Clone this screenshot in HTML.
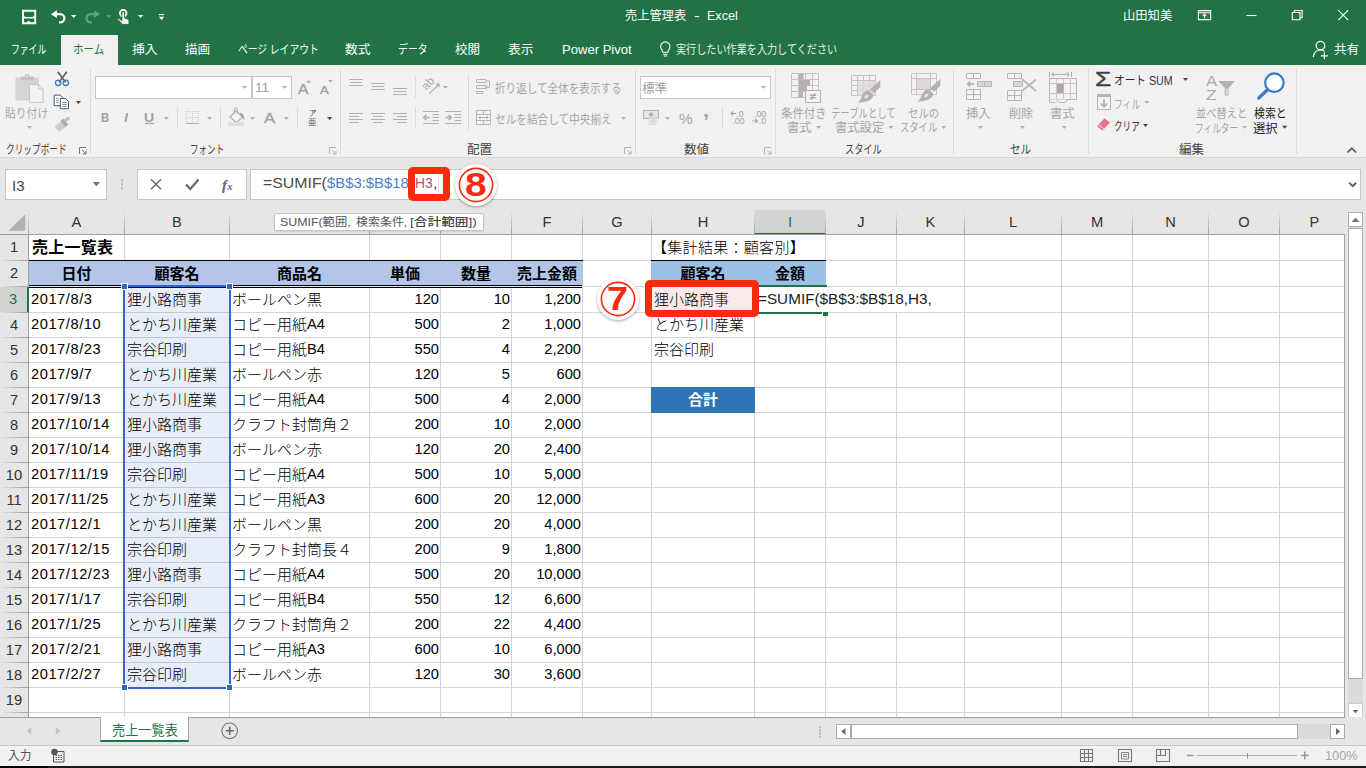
<!DOCTYPE html>
<html lang="ja"><head><meta charset="utf-8"><title>売上管理表 - Excel</title>
<style>
html,body{margin:0;padding:0}
body{width:1366px;height:768px;overflow:hidden;position:relative;background:#e6e6e6;font-family:"Liberation Sans","Noto Sans CJK JP",sans-serif;font-size:13px;color:#444}
div,span,svg{position:absolute;box-sizing:border-box}
span{position:static}
.t{white-space:nowrap;transform-origin:0 50%}
/* title */
#title{left:0;top:0;width:1366px;height:65px;background:#217346}
#title .w{color:#fff;white-space:nowrap}
#hometab{left:61px;top:35px;width:57px;height:30px;background:#f1f1f1}
/* ribbon */
#ribbon{left:0;top:65px;width:1366px;height:93px;background:#f1f1f1;border-bottom:1px solid #d6d6d6}
.sep{width:1px;background:#dadada;top:6px;height:85px}
.ssep{width:1px;background:#dadada}
.gl{top:77px;font-size:12px;color:#444;white-space:nowrap;height:16px;line-height:16px;letter-spacing:-0.5px}
.dis{color:#a6a6a6}
.rt{white-space:nowrap;font-size:12px;line-height:15px;letter-spacing:-0.6px}
.box{background:#fff;border:1px solid #c6c6c6}
/* formula bar */
#fbar{left:0;top:159px;width:1366px;height:51px;background:#e6e6e6}
/* grid */
#grid{left:0;top:0;width:1366px;height:717px;overflow:hidden}
#gridbg{left:28px;top:235px;width:1316px;height:482px;background:#fff}
.ch{top:210px;height:24px;line-height:24px;text-align:center;font-size:14.67px;color:#333;background:#e6e6e6}
.ch.sel{background:#d2d2d2;color:#217346;border-bottom:2px solid #217346;height:25px}
.rh{left:0;width:28px;text-align:center;font-size:14.67px;color:#333;background:#e6e6e6}
.rh.sel{background:#d2d2d2;color:#217346;border-right:2px solid #217346;width:29px;padding-right:1px;z-index:2}
.vl{top:235px;width:1px;height:482px;background:#d4d4d4}
.hl{left:29px;width:1315px;height:1px;background:#d4d4d4}
.c{font-size:15px;font-weight:300;color:#000;white-space:nowrap;padding:0 2px;font-family:"Liberation Sans","Noto Sans CJK JP",sans-serif}
.c.r{text-align:right;padding-right:1px}
.c.ctr{text-align:center;padding:0}
.c.b{font-weight:bold;color:#000}
.n{font-size:14.67px;position:relative;top:-1px;font-weight:400}
.dt{letter-spacing:.55px;padding-left:2px}
</style></head><body>
<div id="title"></div><div id="hometab"></div>
<div class="t" id="L1" style="left:625.3px;top:6.1px;font-size:12px;line-height:20px;height:20px;color:#fff;transform:scaleX(1.0197);">売上管理表</div>
<div class="t" id="L2" style="left:694.3px;top:6.1px;font-size:12px;line-height:20px;height:20px;color:#fff;transform:scaleX(1.4250);">-</div>
<div class="t" id="L3" style="left:706.8px;top:6.1px;font-size:12.5px;line-height:20px;height:20px;color:#fff;transform:scaleX(1.0040);">Excel</div>
<div class="t" id="L4" style="left:1123.3px;top:6.1px;font-size:12px;line-height:20px;height:20px;color:#fff;transform:scaleX(1.0247);">山田知美</div>
<div class="t" id="L5" style="left:11.3px;top:40.1px;font-size:12px;line-height:20px;height:20px;color:#fff;transform:scaleX(0.7331);">ファイル</div>
<div class="t" id="L6" style="left:73.3px;top:40.1px;font-size:12px;line-height:20px;height:20px;color:#217346;transform:scaleX(0.8754);">ホーム</div>
<div class="t" id="L7" style="left:131.8px;top:40.1px;font-size:12px;line-height:20px;height:20px;color:#fff;transform:scaleX(1.0701);">挿入</div>
<div class="t" id="L8" style="left:185.3px;top:40.1px;font-size:12px;line-height:20px;height:20px;color:#fff;transform:scaleX(1.0493);">描画</div>
<div class="t" id="L9" style="left:237.8px;top:40.1px;font-size:12px;line-height:20px;height:20px;color:#fff;transform:scaleX(0.8143);">ページ レイアウト</div>
<div class="t" id="L10" style="left:345.3px;top:40.1px;font-size:12px;line-height:20px;height:20px;color:#fff;transform:scaleX(1.0701);">数式</div>
<div class="t" id="L11" style="left:398.3px;top:40.1px;font-size:12px;line-height:20px;height:20px;color:#fff;transform:scaleX(0.8246);">データ</div>
<div class="t" id="L12" style="left:455.3px;top:40.1px;font-size:12px;line-height:20px;height:20px;color:#fff;transform:scaleX(1.0493);">校閲</div>
<div class="t" id="L13" style="left:507.8px;top:40.1px;font-size:12px;line-height:20px;height:20px;color:#fff;transform:scaleX(1.0701);">表示</div>
<div class="t" id="L14" style="left:561.8px;top:40.1px;font-size:12.5px;line-height:20px;height:20px;color:#fff;transform:scaleX(1.0449);">Power Pivot</div>
<div class="t" id="L15" style="left:676.3px;top:40.1px;font-size:12px;line-height:20px;height:20px;color:#e4efe8;transform:scaleX(0.8427);">実行したい作業を入力してください</div>
<div class="t" id="L16" style="left:1334.3px;top:40.1px;font-size:12px;line-height:20px;height:20px;color:#fff;transform:scaleX(1.0493);">共有</div>
<svg id="ticons" width="1366" height="65" viewBox="0 0 1366 65" style="left:0;top:0" fill="none" stroke="#fff" stroke-width="1.5">
<!-- save -->
<path d="M23 10.800h12.200v12.400H23z" stroke-width="1.900"/><path d="M23 17.700h12.200" stroke-width="1.500"/><path d="M27.500 21h2.200v2.500h-2.200z" fill="#fff" stroke="none"/><path d="M24.300 16.200l1 .8M33.900 16.200l-1 .8" stroke-width="1"/>
<!-- undo -->
<path d="M50.900 14.200l6-3.900v7.800z" fill="#fff" stroke="none"/><path d="M56.500 14.200h3.700a4.200 4.100 0 0 1 0 8.200h-1.200" stroke-width="2.200"/>
<path d="M71 14.900h5.500l-2.750 3.100z" fill="#fff" stroke="none"/>
<!-- redo (dim) -->
<path d="M100 14.200l-6-3.900v7.800z" fill="#62a07d" stroke="none"/><path d="M94.400 14.200h-3.700a4.200 4.100 0 0 0 0 8.200h1.200" stroke="#62a07d" stroke-width="2.200"/>
<path d="M106 14.900h5.500l-2.750 3.100z" fill="#5b9f79" stroke="none"/>
<!-- touch mode -->
<circle cx="123.200" cy="13.200" r="3.300" stroke-width="1.700"/>
<path d="M121.900 12.800a1.300 1.300 0 0 1 2.600 0v5l3.400 1.400c.8.400 1.100 1 1.100 1.800v3.500h-6.300l-4.900-4.900c-.5-.6.300-1.600 1.100-1l3 2z" fill="#f2f2f2" stroke="#217346" stroke-width=".9"/>
<path d="M137.800 14.900h5.500l-2.750 3.100z" fill="#fff" stroke="none"/>
<!-- customize -->
<path d="M158.900 14.550h5.300" stroke-width="1.200"/><path d="M158.800 16.700h5.500l-2.750 3.400z" fill="#fff" stroke="none"/>
<!-- bulb -->
<path d="M662.800 52.300c0-1.700-2.200-3-2.200-5.700a4.700 4.700 0 0 1 9.400 0c0 2.700-2.200 4-2.200 5.700z" stroke-width="1.100"/><path d="M663 54.200h4.600M663.700 56h3.200" stroke-width="1.100"/>
<!-- ribbon display -->
<path d="M1198.400 10.600h12.200v9H1198.400z" stroke-width="1.100"/><path d="M1198.400 12.800h12.200" stroke-width="1.100"/><path d="M1204.500 18.300v-3.800M1202.600 16.200l1.900-1.900 1.900 1.900" stroke-width="1.100"/>
<!-- min -->
<path d="M1246.500 15.500h10" stroke-width="1.100"/>
<!-- restore -->
<path d="M1292.300 12.500h7.700v7.200h-7.700z" stroke-width="1.100"/><path d="M1294.400 12.500v-2h7.700v7.200h-2" stroke-width="1.100"/>
<!-- close -->
<path d="M1338.200 10.200l10 10M1348.200 10.200l-10 10" stroke-width="1.100"/>
<!-- share -->
<circle cx="1320.500" cy="45.600" r="4.300" stroke-width="1.200"/><path d="M1313.300 57c.5-4.500 3.300-7 7.200-7 1.600 0 3 .4 4 1.200" stroke-width="1.200"/><path d="M1324.400 52.300v7M1320.900 55.800h7" stroke-width="1.200"/>
</svg>
<div id="ribbon"></div>
<div class="sep" style="left:90px;top:69px;height:85px"></div>
<div class="sep" style="left:340px;top:69px;height:85px"></div>
<div class="sep" style="left:635px;top:69px;height:85px"></div>
<div class="sep" style="left:775px;top:69px;height:85px"></div>
<div class="sep" style="left:953px;top:69px;height:85px"></div>
<div class="sep" style="left:1088px;top:69px;height:85px"></div>
<div class="sep" style="left:1296px;top:69px;height:85px"></div>
<div class="ssep" style="left:177px;top:107px;height:22px"></div>
<div class="ssep" style="left:220px;top:107px;height:22px"></div>
<div class="ssep" style="left:297px;top:107px;height:22px"></div>
<div class="ssep" style="left:415px;top:76px;height:22px"></div>
<div class="ssep" style="left:415px;top:107px;height:22px"></div>
<div class="ssep" style="left:468px;top:75px;height:55px"></div>
<div class="ssep" style="left:722px;top:107px;height:22px"></div>
<div class="box" style="left:95px;top:76px;width:157px;height:23px"></div>
<div class="box" style="left:252px;top:76px;width:40px;height:23px"></div>
<div class="box" style="left:640px;top:76px;width:131px;height:23px"></div>
<div class="t" id="L17" style="left:6.3px;top:140.1px;font-size:12px;line-height:20px;height:20px;color:#444;transform:scaleX(0.7225);">クリップボード</div>
<div class="t" id="L18" style="left:190.3px;top:140.1px;font-size:12px;line-height:20px;height:20px;color:#444;transform:scaleX(0.7123);">フォント</div>
<div class="t" id="L19" style="left:467.3px;top:140.1px;font-size:12px;line-height:20px;height:20px;color:#444;transform:scaleX(1.0493);">配置</div>
<div class="t" id="L20" style="left:684.3px;top:140.1px;font-size:12px;line-height:20px;height:20px;color:#444;transform:scaleX(1.0493);">数値</div>
<div class="t" id="L21" style="left:845.3px;top:140.1px;font-size:12px;line-height:20px;height:20px;color:#444;transform:scaleX(0.7643);">スタイル</div>
<div class="t" id="L22" style="left:1010.3px;top:140.1px;font-size:12px;line-height:20px;height:20px;color:#444;transform:scaleX(0.8828);">セル</div>
<div class="t" id="L23" style="left:1179.3px;top:140.1px;font-size:12px;line-height:20px;height:20px;color:#444;transform:scaleX(1.0493);">編集</div>
<div class="t" id="L24" style="left:5.3px;top:104.3px;font-size:12px;line-height:20px;height:20px;color:#a6a6a6;transform:scaleX(0.8997);">貼り付け</div>
<div class="t" id="L25" style="left:101.3px;top:108.1px;font-size:12px;line-height:20px;height:20px;color:#a0a0a0;font-weight:bold;transform:scaleX(0.9456);">B</div>
<div class="t" id="L26" style="left:124.3px;top:107.9px;font-size:13px;line-height:20px;height:20px;color:#a0a0a0;font-weight:bold;font-style:italic;font-family:"Liberation Serif",serif;">I</div>
<div class="t" id="L27" style="left:144.3px;top:107.8px;font-size:12px;line-height:20px;height:20px;color:#a0a0a0;font-weight:bold;transform:scaleX(1.1762);">U</div>
<div class="t" id="L28" style="left:254.8px;top:78.1px;font-size:12px;line-height:20px;height:20px;color:#a0a0a0;transform:scaleX(1.1388);">11</div>
<div class="t" id="L29" style="left:297.8px;top:78.6px;font-size:14px;line-height:20px;height:20px;color:#a0a0a0;transform:scaleX(1.1130);-webkit-text-stroke:.3px #a0a0a0;">A</div>
<div class="t" id="L30" style="left:320.3px;top:79.6px;font-size:11.5px;line-height:20px;height:20px;color:#a0a0a0;transform:scaleX(1.1340);-webkit-text-stroke:.3px #a0a0a0;">A</div>
<div class="t" id="L31" style="left:264.3px;top:108.1px;font-size:15px;line-height:20px;height:20px;color:#a0a0a0;transform:scaleX(1.1183);-webkit-text-stroke:.3px #a0a0a0;">A</div>
<div class="t" id="L32" style="left:308.8px;top:108.8px;font-size:8px;line-height:10px;height:10px;color:#666;">ア</div>
<div class="t" id="L33" style="left:308.0px;top:116.9px;font-size:8.5px;line-height:10px;height:10px;color:#666;">亜</div>
<div class="t" id="L34" style="left:494.8px;top:79.1px;font-size:12px;line-height:20px;height:20px;color:#a6a6a6;transform:scaleX(0.8820);">折り返して全体を表示する</div>
<div class="t" id="L35" style="left:494.8px;top:110.1px;font-size:12px;line-height:20px;height:20px;color:#a6a6a6;transform:scaleX(0.8864);">セルを結合して中央揃え</div>
<div class="t" id="L36" style="left:642.3px;top:78.9px;font-size:12px;line-height:20px;height:20px;color:#a0a0a0;transform:scaleX(1.0493);">標準</div>
<div class="t" id="L37" style="left:678.8px;top:108.8px;font-size:14.5px;line-height:20px;height:20px;color:#a6a6a6;transform:scaleX(1.0615);">%</div>
<div class="t" id="L38" style="left:703.3px;top:100.1px;font-size:20px;line-height:20px;height:20px;color:#a6a6a6;font-weight:bold;transform:scaleX(1.1146);font-family:"Liberation Serif",serif;">,</div>
<div class="t" id="L39" style="left:781.3px;top:104.3px;font-size:12px;line-height:20px;height:20px;color:#a6a6a6;transform:scaleX(0.9518);">条件付き</div>
<div class="t" id="L40" style="left:787.3px;top:118.4px;font-size:12px;line-height:20px;height:20px;color:#a6a6a6;transform:scaleX(1.0285);">書式</div>
<div class="t" id="L41" style="left:831.3px;top:104.3px;font-size:12px;line-height:20px;height:20px;color:#a6a6a6;transform:scaleX(0.7803);">テーブルとして</div>
<div class="t" id="L42" style="left:835.3px;top:118.4px;font-size:12px;line-height:20px;height:20px;color:#a6a6a6;transform:scaleX(1.0247);">書式設定</div>
<div class="t" id="L43" style="left:908.3px;top:104.3px;font-size:12px;line-height:20px;height:20px;color:#a6a6a6;transform:scaleX(0.8663);">セルの</div>
<div class="t" id="L44" style="left:900.3px;top:118.4px;font-size:12px;line-height:20px;height:20px;color:#a6a6a6;transform:scaleX(0.7747);">スタイル</div>
<div class="t" id="L45" style="left:966.3px;top:104.1px;font-size:12px;line-height:20px;height:20px;color:#a6a6a6;transform:scaleX(1.0285);">挿入</div>
<div class="t" id="L46" style="left:1008.8px;top:104.1px;font-size:12px;line-height:20px;height:20px;color:#a6a6a6;transform:scaleX(1.0077);">削除</div>
<div class="t" id="L47" style="left:1050.3px;top:104.1px;font-size:12px;line-height:20px;height:20px;color:#a6a6a6;transform:scaleX(1.0285);">書式</div>
<div class="t" id="L48" style="left:1095.3px;top:69.1px;font-size:21px;line-height:20px;height:20px;color:#404040;transform:scaleX(1.2477);-webkit-text-stroke:.45px #404040;">Σ</div>
<div class="t" id="L49" style="left:1114.3px;top:70.6px;font-size:12px;line-height:20px;height:20px;color:#333;transform:scaleX(0.8892);">オート SUM</div>
<div class="t" id="L50" style="left:1114.3px;top:94.6px;font-size:12px;line-height:20px;height:20px;color:#a6a6a6;transform:scaleX(0.7325);">フィル</div>
<div class="t" id="L51" style="left:1114.3px;top:117.1px;font-size:12px;line-height:20px;height:20px;color:#333;transform:scaleX(0.7136);">クリア</div>
<div class="t" id="L52" style="left:1205.8px;top:70.6px;font-size:15px;line-height:20px;height:20px;color:#adaaad;transform:scaleX(1.1183);">A</div>
<div class="t" id="L53" style="left:1206.3px;top:85.0px;font-size:15px;line-height:20px;height:20px;color:#adaaad;transform:scaleX(1.1666);">Z</div>
<div class="t" id="L54" style="left:1195.8px;top:104.4px;font-size:12px;line-height:20px;height:20px;color:#a6a6a6;transform:scaleX(0.8531);">並べ替えと</div>
<div class="t" id="L55" style="left:1194.8px;top:118.6px;font-size:12px;line-height:20px;height:20px;color:#a6a6a6;transform:scaleX(0.7228);">フィルター</div>
<div class="t" id="L56" style="left:1254.3px;top:104.4px;font-size:12px;line-height:20px;height:20px;color:#222;transform:scaleX(0.9079);">検索と</div>
<div class="t" id="L57" style="left:1253.3px;top:118.6px;font-size:12px;line-height:20px;height:20px;color:#222;transform:scaleX(1.0285);">選択</div>
<svg id="ricons" width="1366" height="160" viewBox="0 0 1366 160" style="left:0;top:0" fill="none">
<path d="M15.500 77.500h23v23h-23z" fill="#d6d3d6"/><path d="M20.600 76.500h4a2.600 2.600 0 0 1 5.200 0h4v3.400h-13.200z" fill="#c3c0c3"/><circle cx="27.200" cy="76.300" r="1" fill="#f1f1f1"/>
<path d="M29.500 84.500h9l4.500 4.500v13.500h-13.500z" fill="#f4f0f4" stroke="#c9c6c9"/><path d="M38.500 84.500v4.500h4.500" stroke="#c9c6c9"/>
<path d="M27.0 126.0H32.2L29.6 129.0z" fill="#b4b4b4"/>
<path d="M57.800 71.800l7.800 10.600M66.800 71.800l-7.800 10.600" stroke="#5a5a5a" stroke-width="1.600"/><circle cx="58.200" cy="82.800" r="2.700" stroke="#3f7cc2" stroke-width="1.300"/><circle cx="65.800" cy="82.800" r="2.700" stroke="#3f7cc2" stroke-width="1.300"/>
<path d="M54.200 95.100h6l2.600 2.600v8h-8.600z" fill="#fff" stroke="#555" stroke-width="1"/><path d="M60.300 98.500h5.200l3 3v7.200h-8.200z" fill="#fff" stroke="#555" stroke-width="1"/><path d="M56 98.500h2.500M56 100.500h2.500M56 102.500h2.500M62.300 102.500h4.400M62.300 104.500h4.400M62.300 106.500h4.400" stroke="#3f7cc2" stroke-width=".8"/>
<path d="M76.0 101.0H81.0L78.5 104.0z" fill="#444"/>
<path d="M54.500 126.500l6.500-5 4.500 5.500-6.500 5z" fill="#cfcccf"/><path d="M60.500 121l3-2.300 4.800 5.800-3 2.500z" fill="#aaa7aa"/><path d="M64.200 119.500l4-3.200 2 2.500-4 3.200z" fill="#c2bfc2"/>
<path d="M79.5 154.0v-6.500h6.500" fill="none" stroke="#777" stroke-width="1"/><path d="M82.0 150.0l4 4m0-3.200v3.200h-3.200" fill="none" stroke="#777" stroke-width="1"/>
<path d="M242.0 86.0H247.2L244.6 88.8z" fill="#b1b1b1"/>
<path d="M282.0 86.0H287.2L284.6 88.8z" fill="#b1b1b1"/>
<path d="M163.7 117.0H169.0L166.3 120.0z" fill="#b1b1b1"/>
<path d="M207.0 117.0H212.0L209.5 120.0z" fill="#b1b1b1"/>
<path d="M250.0 117.0H255.0L252.5 120.0z" fill="#b1b1b1"/>
<path d="M283.7 117.0H289.0L286.4 120.0z" fill="#b1b1b1"/>
<path d="M327.0 117.0H332.2L329.6 120.0z" fill="#444"/>
<path d="M145 123.500h9" stroke="#a0a0a0" stroke-width="1.200"/>
<path d="M306 82.700h5l-2.500-2.700z" fill="#b1b1b1"/><path d="M328 80h4.800l-2.400 2.700z" fill="#b1b1b1"/>
<path d="M186.500 111.500h12M186.500 117.500h12M186.500 111v12M192.500 111v12M198.500 111v12" stroke="#d5c4d5" stroke-width="1" stroke-dasharray="1 1"/><path d="M186 123.500h13" stroke="#b5b5b5" stroke-width="1.200"/>
<path d="M230 117l6.300-6.300 6.300 6.300-6.300 5.600z" fill="#f7f3f7" stroke="#a9a9a9" stroke-width="1.100"/><path d="M234.300 113.300v-4a1.400 1.400 0 0 1 2.800 0v4.500" stroke="#a9a9a9" stroke-width="1"/><path d="M240.300 112.600c2.500.600 4.300 3.200 4 7.300-.1.500-.6.500-.8 0-.4-2-1.600-3.600-3.400-4.300z" fill="#a9a9a9"/><path d="M228 122h16v4h-16z" fill="#e3dbe3"/>
<path d="M312 111.300l4-1" stroke="#666" stroke-width=".8"/>
<path d="M329.5 154.0v-6.500h6.500" fill="none" stroke="#b5b5b5" stroke-width="1"/><path d="M332.0 150.0l4 4m0-3.200v3.200h-3.200" fill="none" stroke="#b5b5b5" stroke-width="1"/>
<path d="M349.0 79.5H363.0M350.0 82.5H362.0M349.0 85.5H363.0" stroke="#b1b1b1" stroke-width="1"/>
<path d="M371.0 83.5H385.0M372.0 86.5H384.0M371.0 89.5H385.0" stroke="#b1b1b1" stroke-width="1"/>
<path d="M393.0 88.5H407.0M394.0 91.5H406.0M393.0 94.5H407.0" stroke="#b1b1b1" stroke-width="1"/>
<path d="M349.0 113.5H363.0M349.0 116.5H359.0M349.0 119.5H363.0M349.0 122.5H359.0" stroke="#b1b1b1" stroke-width="1"/>
<path d="M371.0 113.5H385.0M373.0 116.5H383.0M371.0 119.5H385.0M373.0 122.5H383.0" stroke="#b1b1b1" stroke-width="1"/>
<path d="M393.0 113.5H407.0M397.0 116.5H407.0M393.0 119.5H407.0M397.0 122.5H407.0" stroke="#b1b1b1" stroke-width="1"/>
<path d="M429.200 93.800l9.600-9.300M436 84.200h3v3" stroke="#b1b1b1" stroke-width="1.200"/>
<text x="0" y="0" transform="translate(426.300 90.800) rotate(-47)" font-family="Liberation Sans,sans-serif" font-size="11.500" fill="#a8a8a8">ab</text>
<path d="M442.7 86.0H448.0L445.4 88.8z" fill="#b1b1b1"/>
<path d="M423 111.500h16M423 123.500h16M432.500 114.500h6.500M432.500 117.500h6.500M432.500 120.500h6.500" stroke="#b1b1b1" stroke-width="1"/><path d="M430 117.500h-6M426.500 114.800l-2.800 2.700 2.800 2.700" stroke="#b5b5b5" stroke-width="1.600"/>
<path d="M445 111.500h16M445 123.500h16M454.500 114.500h6.500M454.500 117.500h6.500M454.500 120.500h6.500" stroke="#b1b1b1" stroke-width="1"/><path d="M445.500 117.500h6M448.500 114.800l2.800 2.700-2.800 2.700" stroke="#b5b5b5" stroke-width="1.600"/>
<path d="M476.500 79.500h9.500v3h-9.500zM476.500 85.500h9.500v3h-9.500zM476.500 91.500h6.500v2h-6.500z" stroke="#b8b5b8" stroke-width="1"/><path d="M486 81h3.500v6.500h-4M487.500 85.500l-2 2 2 2" stroke="#b8b5b8" stroke-width="1"/>
<path d="M476.500 110.500h14v14h-14z" fill="#f4f0f4" stroke="#b8b5b8"/><path d="M476.500 114.500h14M476.500 120.500h14M483.500 110.500v4M483.500 120.500v4" stroke="#b8b5b8"/><path d="M479 117.500h9M480.500 116l-1.500 1.500 1.500 1.500M486.500 116l1.500 1.500-1.500 1.500" stroke="#aaa" stroke-width=".9"/>
<path d="M621.0 117.0H626.0L623.5 120.0z" fill="#b1b1b1"/>
<path d="M624.5 154.0v-6.500h6.500" fill="none" stroke="#b5b5b5" stroke-width="1"/><path d="M627.0 150.0l4 4m0-3.200v3.200h-3.200" fill="none" stroke="#b5b5b5" stroke-width="1"/>
<path d="M760.7 86.0H766.0L763.4 88.8z" fill="#b1b1b1"/>
<path d="M643.500 110.500h15v8h-15z" fill="#e6e2e6" stroke="#b5b2b5"/><circle cx="651" cy="114.500" r="2.200" fill="#b5b2b5"/><ellipse cx="653.500" cy="118.500" rx="4.500" ry="1.300" fill="#d9d5d9"/><ellipse cx="653" cy="121.300" rx="4.500" ry="1.300" fill="#d9d5d9"/><ellipse cx="652" cy="124" rx="4.500" ry="1.300" fill="#e0dce0"/>
<path d="M665.0 117.0H670.0L667.5 120.0z" fill="#b1b1b1"/>
<text font-family="Liberation Sans,sans-serif" font-size="8.800" fill="#a3a3a3"><tspan x="736.300" y="117">.0</tspan><tspan x="732.300" y="124">.00</tspan><tspan x="754" y="117">.00</tspan><tspan x="758.700" y="124">.0</tspan></text>
<path d="M736.200 113.500h-5.200M733.200 111.300l-2.200 2.200 2.200 2.200" stroke="#a3a3a3" stroke-width="1.100"/><path d="M752.300 121h5.200M755.300 118.800l2.200 2.200-2.200 2.200" stroke="#a3a3a3" stroke-width="1.100"/>
<path d="M764.5 154.0v-6.500h6.500" fill="none" stroke="#b5b5b5" stroke-width="1"/><path d="M767.0 150.0l4 4m0-3.200v3.200h-3.200" fill="none" stroke="#b5b5b5" stroke-width="1"/>
<path d="M791.500 73.500h27v24h-27z" fill="#f4f0f4" stroke="#c6c3c6"/><path d="M798.500 73.500v24M805.500 73.500v24M812.500 73.500v24M791.500 79.500h27M791.500 85.500h27M791.500 91.500h27" stroke="#c6c3c6"/>
<path d="M799 74h4.500v5.500h-4.500zM799 80h11v5.500h-11zM799 86h8v5.500h-8zM799 92h4v5h-4z" fill="#b4b1b4"/>
<path d="M805.500 90.500h15v12h-15z" fill="#f4f0f4" stroke="#b4b1b4"/><path d="M809.800 95.200h6.400M809.800 97.800h6.400M814.800 93.300l-3.600 6.600" stroke="#909090" stroke-width="1"/>
<path d="M851.500 75.500h24v20h-24z" fill="#f4f0f4" stroke="#c6c3c6"/><path d="M857.500 75.500v20M863.500 75.500v20M869.500 75.500v20M851.500 80.500h24M851.500 85.500h24M851.500 90.500h24" stroke="#c6c3c6"/><path d="M858 81h17.500v14.500h-17.500z" fill="#dcd8dc" opacity=".8"/>
<path d="M880.3 80.3 v6.700l-6.300 6-4-3.500z" fill="#b4b1b4"/><path d="M868.8 90.6 l4.200 3.900c.700 4.600-5 8.200-15.400 8.100 3-2 3.400-5.200 5-8.200 1.300-2.600 3.600-4 6.200-3.800z" fill="#b4b1b4"/><ellipse cx="866.3" cy="96.6" rx="2.300" ry="1.400" fill="#e9e6e9" transform="rotate(-40 866.3 96.6)"/>
<path d="M911.500 73.500h25v21h-25z" fill="#f4f0f4" stroke="#c6c3c6"/><path d="M916.500 73.500v21M930.500 73.500v21M911.500 78.500h25M911.500 89.500h25" stroke="#c6c3c6"/><path d="M917 79h13v10h-13z" fill="#dcd8dc"/>
<path d="M940.3 79.1 v6.700l-6.300 6-4-3.500z" fill="#b4b1b4"/><path d="M928.8 89.4 l4.200 3.900c.700 4.600-5 8.200-15.400 8.100 3-2 3.400-5.200 5-8.200 1.300-2.600 3.600-4 6.200-3.800z" fill="#b4b1b4"/><ellipse cx="926.3" cy="95.4" rx="2.300" ry="1.400" fill="#e9e6e9" transform="rotate(-40 926.3 95.4)"/>
<path d="M816.0 126.0H821.0L818.5 128.9z" fill="#b1b1b1"/>
<path d="M888.3 126.0H893.3L890.8 128.9z" fill="#b1b1b1"/>
<path d="M941.3 126.0H946.3L943.8 128.9z" fill="#b1b1b1"/>
<path d="M966.500 73.500h14v5h-14zM973.500 73.500v5M966.500 89.500h14v10h-14zM973.500 89.500v10M966.500 94.500h14" fill="#f4f0f4" stroke="#b8b5b8"/><path d="M977.500 81.500h14v5h-14z" fill="#d9d5d9" stroke="#b8b5b8"/><path d="M984.500 81.500v5" stroke="#b8b5b8"/><path d="M974 84h-6.500M970.300 81.500l-2.600 2.500 2.600 2.500" stroke="#aaa" stroke-width="1.500"/>
<path d="M1007.500 73.500h14v5h-14zM1014.500 73.500v5M1007.500 90.500h14v10h-14zM1014.500 90.500v10M1007.500 95.500h14" fill="#f4f0f4" stroke="#b8b5b8"/><path d="M1013.500 81.500h9v5h-9z" fill="#d9d5d9" stroke="#b8b5b8"/><path d="M1022 79l14 12M1036 79.500l-14 11.500" stroke="#bab7ba" stroke-width="1.800"/>
<path d="M1049.500 78.500h27v21h-27z" fill="#f4f0f4" stroke="#b8b5b8"/><path d="M1056.500 78.500v21M1063.500 78.500v21M1070.500 78.500v21M1049.500 83.500h27M1049.500 93.500h27" stroke="#c9c6c9"/><path d="M1057 84h6.500v9h-6.500z" fill="#aaa7aa"/><path d="M1049.500 99.500v3h6l2-2 2 2h6l2-3" fill="#f4f0f4" stroke="#b8b5b8"/><path d="M1049.500 72v4.800M1071.500 72v4.800M1051.800 74.400h17.400M1054.200 72l-2.500 2.400 2.500 2.400M1066.800 72l2.500 2.400-2.500 2.400" stroke="#a8a8a8" stroke-width="1"/>
<path d="M977.7 126.0H983.0L980.4 129.0z" fill="#b1b1b1"/>
<path d="M1019.7 126.0H1025.0L1022.4 129.0z" fill="#b1b1b1"/>
<path d="M1061.6 126.0H1066.9L1064.2 129.0z" fill="#b1b1b1"/>
<path d="M1183.0 78.0H1188.0L1185.5 81.0z" fill="#444"/>
<path d="M1097.500 94.500h13v15h-13z" fill="#f4f0f4" stroke="#b8b5b8"/><path d="M1097 94h14v3h-14z" fill="#b8b5b8"/><path d="M1104 99v7.500M1100.800 103.500l3.200 3.200 3.200-3.200" stroke="#aaa" stroke-width="1.400"/>
<path d="M1144.0 101.0H1149.4L1146.7 103.8z" fill="#b1b1b1"/>
<path d="M1104.500 118.200l5.500 4.300-7.500 8-5.500-4.300z" fill="#e8758c"/><path d="M1098.300 124.500l5.500 4.300" stroke="#f1f1f1" stroke-width=".9"/>
<path d="M1143.0 124.0H1148.0L1145.5 127.0z" fill="#444"/>
<path d="M1218.300 81h16.700l-6.500 7v7.500h-3.700v-7.500z" fill="#b4b1b4"/><path d="M1226.300 88.500h1.200v6h-1.200z" fill="#f1f1f1"/>
<path d="M1242.0 126.0H1247.0L1244.5 128.8z" fill="#b1b1b1"/>
<circle cx="1274.400" cy="82.700" r="9.200" fill="#fff" stroke="#3e7dc1" stroke-width="2.300"/><path d="M1267.500 89.800l-8.700 8.200" stroke="#3e7dc1" stroke-width="3.400" stroke-linecap="round"/>
<path d="M1282.0 125.8H1287.3L1284.7 128.8z" fill="#444"/>
<path d="M1347.500 152.500l4.300-4.300 4.300 4.300" stroke="#555" stroke-width="1.700"/>
</svg>
<div id="fbar"></div>
<div class="box" style="left:5px;top:169px;width:102px;height:31px;border-color:#c6c6c6"></div>
<div class="box" style="left:137px;top:169px;width:110px;height:31px;border-color:#c6c6c6"></div>
<div class="box" style="left:250px;top:169px;width:1111px;height:31px;border-color:#c6c6c6"></div>
<div class="t" id="L58" style="left:11.7px;top:176.4px;font-size:15.5px;line-height:20px;height:20px;color:#444;transform:scaleX(0.9739);">I3</div>
<div class="t" id="L59" style="left:263.1px;top:173.2px;font-size:14.67px;line-height:20px;height:20px;color:#4a4a4a;transform:scaleX(1.0822);">=SUMIF(</div>
<div class="t" id="L60" style="left:327.1px;top:173.2px;font-size:14.67px;line-height:20px;height:20px;color:#4a7ed0;transform:scaleX(1.0134);">$B$3:$B$18,</div>
<div class="t" id="L61" style="left:415.3px;top:173.2px;font-size:14.67px;line-height:20px;height:20px;color:#c0496b;transform:scaleX(0.9440);">H3</div>
<div class="t" id="L62" style="left:432.9px;top:173.2px;font-size:14.67px;line-height:20px;height:20px;color:#4a4a4a;transform:scaleX(1.1280);">,</div>
<svg width="1366" height="52" viewBox="0 159 1366 52" style="left:0;top:159px" fill="none">
<path d="M92.700 182h7.400l-3.700 4.300z" fill="#777"/>
<path d="M121 180h2v2h-2zM121 184h2v2h-2zM121 188h2v2h-2z" fill="#b5b5b5" transform="translate(0 -.8)"/>
<path d="M151 179.300l10 10M161 179.300l-10 10" stroke="#6a6a6a" stroke-width="1.500"/>
<path d="M186 184.500l4.300 4.500 8.200-9.500" stroke="#6a6a6a" stroke-width="2.200"/>
<path d="M1349.200 182.700l3.500 3.500 3.500-3.500" stroke="#666" stroke-width="2"/>
<text x="222" y="189.500" font-family="Liberation Serif,serif" font-style="italic" font-weight="bold" font-size="15" fill="#666">f</text>
<text x="227.500" y="190" font-family="Liberation Serif,serif" font-style="italic" font-weight="bold" font-size="10" fill="#666">x</text>
</svg>
<div id="grid">
<div id="gridbg"></div>
<div class="ch" style="left:29px;width:95px">A</div>
<div class="ch" style="left:125px;width:104px">B</div>
<div class="ch" style="left:230px;width:139px">C</div>
<div class="ch" style="left:370px;width:70px">D</div>
<div class="ch" style="left:441px;width:70px">E</div>
<div class="ch" style="left:512px;width:70px">F</div>
<div class="ch" style="left:583px;width:68px">G</div>
<div class="ch" style="left:652px;width:102px">H</div>
<div class="ch sel" style="left:755px;width:70px">I</div>
<div class="ch" style="left:826px;width:70px">J</div>
<div class="ch" style="left:897px;width:67px">K</div>
<div class="ch" style="left:965px;width:96px">L</div>
<div class="ch" style="left:1062px;width:70px">M</div>
<div class="ch" style="left:1133px;width:75px">N</div>
<div class="ch" style="left:1209px;width:70px">O</div>
<div class="ch" style="left:1280px;width:69px">P</div>
<div style="left:0;top:234px;width:1345px;height:1px;background:#9f9f9f"></div>
<div style="left:0;top:210px;width:28px;height:24px;background:#e6e6e6"></div>
<svg width="18" height="18" style="left:8px;top:214px"><path d="M17.400 .300v16.400H.400z" fill="#b2b2b2"/></svg>
<div class="rh" style="top:235px;height:25px;line-height:25px">1</div>
<div class="rh" style="top:261px;height:25px;line-height:25px">2</div>
<div class="rh sel" style="top:287px;height:25px;line-height:25px">3</div>
<div class="rh" style="top:313px;height:24px;line-height:24px">4</div>
<div class="rh" style="top:338px;height:24px;line-height:24px">5</div>
<div class="rh" style="top:363px;height:24px;line-height:24px">6</div>
<div class="rh" style="top:388px;height:24px;line-height:24px">7</div>
<div class="rh" style="top:413px;height:24px;line-height:24px">8</div>
<div class="rh" style="top:438px;height:24px;line-height:24px">9</div>
<div class="rh" style="top:463px;height:24px;line-height:24px">10</div>
<div class="rh" style="top:488px;height:24px;line-height:24px">11</div>
<div class="rh" style="top:513px;height:24px;line-height:24px">12</div>
<div class="rh" style="top:538px;height:24px;line-height:24px">13</div>
<div class="rh" style="top:563px;height:24px;line-height:24px">14</div>
<div class="rh" style="top:588px;height:24px;line-height:24px">15</div>
<div class="rh" style="top:613px;height:24px;line-height:24px">16</div>
<div class="rh" style="top:638px;height:24px;line-height:24px">17</div>
<div class="rh" style="top:663px;height:24px;line-height:24px">18</div>
<div class="rh" style="top:688px;height:24px;line-height:24px">19</div>
<div class="rh" style="top:713px;height:24px;line-height:24px"></div>
<div style="left:28px;top:235px;width:1px;height:482px;background:#9f9f9f"></div>
<div style="left:28px;top:211px;width:1px;height:24px;background:linear-gradient(to bottom,rgba(160,160,160,0),#a2a2a2)"></div>
<div style="left:1344px;top:235px;width:1px;height:483px;background:#9f9f9f;z-index:3"></div>
<div class="vl" style="left:124px"></div>
<div style="left:124px;top:211px;width:1px;height:23px;background:linear-gradient(to bottom,rgba(160,160,160,0),#a2a2a2)"></div>
<div class="vl" style="left:229px"></div>
<div style="left:229px;top:211px;width:1px;height:23px;background:linear-gradient(to bottom,rgba(160,160,160,0),#a2a2a2)"></div>
<div class="vl" style="left:369px"></div>
<div style="left:369px;top:211px;width:1px;height:23px;background:linear-gradient(to bottom,rgba(160,160,160,0),#a2a2a2)"></div>
<div class="vl" style="left:440px"></div>
<div style="left:440px;top:211px;width:1px;height:23px;background:linear-gradient(to bottom,rgba(160,160,160,0),#a2a2a2)"></div>
<div class="vl" style="left:511px"></div>
<div style="left:511px;top:211px;width:1px;height:23px;background:linear-gradient(to bottom,rgba(160,160,160,0),#a2a2a2)"></div>
<div class="vl" style="left:582px"></div>
<div style="left:582px;top:211px;width:1px;height:23px;background:linear-gradient(to bottom,rgba(160,160,160,0),#a2a2a2)"></div>
<div class="vl" style="left:651px"></div>
<div style="left:651px;top:211px;width:1px;height:23px;background:linear-gradient(to bottom,rgba(160,160,160,0),#a2a2a2)"></div>
<div class="vl" style="left:754px"></div>
<div style="left:754px;top:211px;width:1px;height:23px;background:linear-gradient(to bottom,rgba(160,160,160,0),#a2a2a2)"></div>
<div class="vl" style="left:825px"></div>
<div style="left:825px;top:211px;width:1px;height:23px;background:linear-gradient(to bottom,rgba(160,160,160,0),#a2a2a2)"></div>
<div class="vl" style="left:896px"></div>
<div style="left:896px;top:211px;width:1px;height:23px;background:linear-gradient(to bottom,rgba(160,160,160,0),#a2a2a2)"></div>
<div class="vl" style="left:964px"></div>
<div style="left:964px;top:211px;width:1px;height:23px;background:linear-gradient(to bottom,rgba(160,160,160,0),#a2a2a2)"></div>
<div class="vl" style="left:1061px"></div>
<div style="left:1061px;top:211px;width:1px;height:23px;background:linear-gradient(to bottom,rgba(160,160,160,0),#a2a2a2)"></div>
<div class="vl" style="left:1132px"></div>
<div style="left:1132px;top:211px;width:1px;height:23px;background:linear-gradient(to bottom,rgba(160,160,160,0),#a2a2a2)"></div>
<div class="vl" style="left:1208px"></div>
<div style="left:1208px;top:211px;width:1px;height:23px;background:linear-gradient(to bottom,rgba(160,160,160,0),#a2a2a2)"></div>
<div class="vl" style="left:1279px"></div>
<div style="left:1279px;top:211px;width:1px;height:23px;background:linear-gradient(to bottom,rgba(160,160,160,0),#a2a2a2)"></div>
<div class="vl" style="left:1344px"></div>
<div class="hl" style="top:260px"></div>
<div style="left:0;top:260px;width:28px;height:1px;background:linear-gradient(to right,rgba(160,160,160,0),#a2a2a2)"></div>
<div class="hl" style="top:286px"></div>
<div style="left:0;top:286px;width:28px;height:1px;background:linear-gradient(to right,rgba(160,160,160,0),#a2a2a2)"></div>
<div class="hl" style="top:312px"></div>
<div style="left:0;top:312px;width:28px;height:1px;background:linear-gradient(to right,rgba(160,160,160,0),#a2a2a2)"></div>
<div class="hl" style="top:337px"></div>
<div style="left:0;top:337px;width:28px;height:1px;background:linear-gradient(to right,rgba(160,160,160,0),#a2a2a2)"></div>
<div class="hl" style="top:362px"></div>
<div style="left:0;top:362px;width:28px;height:1px;background:linear-gradient(to right,rgba(160,160,160,0),#a2a2a2)"></div>
<div class="hl" style="top:387px"></div>
<div style="left:0;top:387px;width:28px;height:1px;background:linear-gradient(to right,rgba(160,160,160,0),#a2a2a2)"></div>
<div class="hl" style="top:412px"></div>
<div style="left:0;top:412px;width:28px;height:1px;background:linear-gradient(to right,rgba(160,160,160,0),#a2a2a2)"></div>
<div class="hl" style="top:437px"></div>
<div style="left:0;top:437px;width:28px;height:1px;background:linear-gradient(to right,rgba(160,160,160,0),#a2a2a2)"></div>
<div class="hl" style="top:462px"></div>
<div style="left:0;top:462px;width:28px;height:1px;background:linear-gradient(to right,rgba(160,160,160,0),#a2a2a2)"></div>
<div class="hl" style="top:487px"></div>
<div style="left:0;top:487px;width:28px;height:1px;background:linear-gradient(to right,rgba(160,160,160,0),#a2a2a2)"></div>
<div class="hl" style="top:512px"></div>
<div style="left:0;top:512px;width:28px;height:1px;background:linear-gradient(to right,rgba(160,160,160,0),#a2a2a2)"></div>
<div class="hl" style="top:537px"></div>
<div style="left:0;top:537px;width:28px;height:1px;background:linear-gradient(to right,rgba(160,160,160,0),#a2a2a2)"></div>
<div class="hl" style="top:562px"></div>
<div style="left:0;top:562px;width:28px;height:1px;background:linear-gradient(to right,rgba(160,160,160,0),#a2a2a2)"></div>
<div class="hl" style="top:587px"></div>
<div style="left:0;top:587px;width:28px;height:1px;background:linear-gradient(to right,rgba(160,160,160,0),#a2a2a2)"></div>
<div class="hl" style="top:612px"></div>
<div style="left:0;top:612px;width:28px;height:1px;background:linear-gradient(to right,rgba(160,160,160,0),#a2a2a2)"></div>
<div class="hl" style="top:637px"></div>
<div style="left:0;top:637px;width:28px;height:1px;background:linear-gradient(to right,rgba(160,160,160,0),#a2a2a2)"></div>
<div class="hl" style="top:662px"></div>
<div style="left:0;top:662px;width:28px;height:1px;background:linear-gradient(to right,rgba(160,160,160,0),#a2a2a2)"></div>
<div class="hl" style="top:687px"></div>
<div style="left:0;top:687px;width:28px;height:1px;background:linear-gradient(to right,rgba(160,160,160,0),#a2a2a2)"></div>
<div class="hl" style="top:712px"></div>
<div style="left:0;top:712px;width:28px;height:1px;background:linear-gradient(to right,rgba(160,160,160,0),#a2a2a2)"></div>
<div class="hl" style="top:737px"></div>
<div style="left:0;top:737px;width:28px;height:1px;background:linear-gradient(to right,rgba(160,160,160,0),#a2a2a2)"></div>
<div style="left:29px;top:261px;width:554px;height:24px;background:#b4c6e7"></div>
<div style="left:29px;top:260px;width:554px;height:1px;background:#000"></div>
<div style="left:29px;top:285px;width:553px;height:3px;border-top:1px solid #000;border-bottom:1px solid #000;background:#dfe6f4"></div>
<div style="left:651px;top:261px;width:175px;height:26px;background:#9bc2e6"></div>
<div style="left:651px;top:260px;width:175px;height:1px;background:#000"></div>
<div class="c ctr b" style="left:29px;top:261px;width:95px;height:25px;line-height:25px;">日付</div>
<div class="c ctr b" style="left:125px;top:261px;width:104px;height:25px;line-height:25px;">顧客名</div>
<div class="c ctr b" style="left:230px;top:261px;width:139px;height:25px;line-height:25px;">商品名</div>
<div class="c ctr b" style="left:370px;top:261px;width:70px;height:25px;line-height:25px;">単価</div>
<div class="c ctr b" style="left:441px;top:261px;width:70px;height:25px;line-height:25px;">数量</div>
<div class="c ctr b" style="left:512px;top:261px;width:70px;height:25px;line-height:25px;">売上金額</div>
<div class="c ctr b" style="left:652px;top:261px;width:102px;height:25px;line-height:25px;">顧客名</div>
<div class="c ctr b" style="left:755px;top:261px;width:70px;height:25px;line-height:25px;">金額</div>
<div class="c l b" style="left:29px;top:235px;width:95px;height:25px;line-height:25px;font-size:16px;letter-spacing:.25px;padding-left:3px;">売上一覧表</div>
<div style="left:754px;top:235px;width:1px;height:25px;background:#fff"></div>
<div class="c l" style="left:652px;top:235px;width:173px;height:25px;line-height:25px;padding-left:0;letter-spacing:.3px;">【集計結果：顧客別】</div>
<div style="left:125px;top:287px;width:104px;height:400px;background:rgba(68,114,196,.12)"></div>
<div style="left:651px;top:287px;width:104px;height:26px;background:#fbe9ea"></div>
<div style="left:651px;top:387px;width:104px;height:26px;background:#2e75b6"></div>
<div class="c l" style="left:652px;top:287px;width:102px;height:25px;line-height:25px;">狸小路商事</div>
<div class="c l" style="left:652px;top:313px;width:102px;height:24px;line-height:24px;">とかち川産業</div>
<div class="c l" style="left:652px;top:338px;width:102px;height:24px;line-height:24px;">宗谷印刷</div>
<div class="c ctr b" style="left:652px;top:388px;width:102px;height:24px;line-height:24px;color:#fff;">合計</div>
<div style="left:755px;top:287px;width:209px;height:25px;background:#fff"></div>
<div style="left:754px;top:285px;width:73px;height:2px;background:#217346"></div>
<div style="left:754px;top:312px;width:68px;height:2px;background:#217346"></div>
<div style="left:753px;top:285px;width:2px;height:29px;background:#217346"></div>
<div style="left:823px;top:312px;width:5px;height:4px;background:#217346"></div>
<div class="t" id="L63" style="left:758.1px;top:286.5px;font-size:14.67px;line-height:24px;height:24px;color:#222;transform:scaleX(1.0427);">=SUMIF($B$3:$B$18,H3,</div>
<div class="c l dt" style="left:29px;top:287px;width:95px;height:25px;line-height:25px;"><span class="n">2017/8/3</span></div>
<div class="c l" style="left:125px;top:287px;width:104px;height:25px;line-height:25px;">狸小路商事</div>
<div class="c l" style="left:230px;top:287px;width:139px;height:25px;line-height:25px;">ボールペン黒</div>
<div class="c r" style="left:370px;top:287px;width:70px;height:25px;line-height:25px;"><span class="n">120</span></div>
<div class="c r" style="left:441px;top:287px;width:70px;height:25px;line-height:25px;"><span class="n">10</span></div>
<div class="c r" style="left:512px;top:287px;width:70px;height:25px;line-height:25px;"><span class="n">1,200</span></div>
<div class="c l dt" style="left:29px;top:313px;width:95px;height:24px;line-height:24px;"><span class="n">2017/8/10</span></div>
<div class="c l" style="left:125px;top:313px;width:104px;height:24px;line-height:24px;">とかち川産業</div>
<div class="c l" style="left:230px;top:313px;width:139px;height:24px;line-height:24px;">コピー用紙<span class="n">A4</span></div>
<div class="c r" style="left:370px;top:313px;width:70px;height:24px;line-height:24px;"><span class="n">500</span></div>
<div class="c r" style="left:441px;top:313px;width:70px;height:24px;line-height:24px;"><span class="n">2</span></div>
<div class="c r" style="left:512px;top:313px;width:70px;height:24px;line-height:24px;"><span class="n">1,000</span></div>
<div class="c l dt" style="left:29px;top:338px;width:95px;height:24px;line-height:24px;"><span class="n">2017/8/23</span></div>
<div class="c l" style="left:125px;top:338px;width:104px;height:24px;line-height:24px;">宗谷印刷</div>
<div class="c l" style="left:230px;top:338px;width:139px;height:24px;line-height:24px;">コピー用紙<span class="n">B4</span></div>
<div class="c r" style="left:370px;top:338px;width:70px;height:24px;line-height:24px;"><span class="n">550</span></div>
<div class="c r" style="left:441px;top:338px;width:70px;height:24px;line-height:24px;"><span class="n">4</span></div>
<div class="c r" style="left:512px;top:338px;width:70px;height:24px;line-height:24px;"><span class="n">2,200</span></div>
<div class="c l dt" style="left:29px;top:363px;width:95px;height:24px;line-height:24px;"><span class="n">2017/9/7</span></div>
<div class="c l" style="left:125px;top:363px;width:104px;height:24px;line-height:24px;">とかち川産業</div>
<div class="c l" style="left:230px;top:363px;width:139px;height:24px;line-height:24px;">ボールペン赤</div>
<div class="c r" style="left:370px;top:363px;width:70px;height:24px;line-height:24px;"><span class="n">120</span></div>
<div class="c r" style="left:441px;top:363px;width:70px;height:24px;line-height:24px;"><span class="n">5</span></div>
<div class="c r" style="left:512px;top:363px;width:70px;height:24px;line-height:24px;"><span class="n">600</span></div>
<div class="c l dt" style="left:29px;top:388px;width:95px;height:24px;line-height:24px;"><span class="n">2017/9/13</span></div>
<div class="c l" style="left:125px;top:388px;width:104px;height:24px;line-height:24px;">とかち川産業</div>
<div class="c l" style="left:230px;top:388px;width:139px;height:24px;line-height:24px;">コピー用紙<span class="n">A4</span></div>
<div class="c r" style="left:370px;top:388px;width:70px;height:24px;line-height:24px;"><span class="n">500</span></div>
<div class="c r" style="left:441px;top:388px;width:70px;height:24px;line-height:24px;"><span class="n">4</span></div>
<div class="c r" style="left:512px;top:388px;width:70px;height:24px;line-height:24px;"><span class="n">2,000</span></div>
<div class="c l dt" style="left:29px;top:413px;width:95px;height:24px;line-height:24px;"><span class="n">2017/10/14</span></div>
<div class="c l" style="left:125px;top:413px;width:104px;height:24px;line-height:24px;">狸小路商事</div>
<div class="c l" style="left:230px;top:413px;width:139px;height:24px;line-height:24px;">クラフト封筒角２</div>
<div class="c r" style="left:370px;top:413px;width:70px;height:24px;line-height:24px;"><span class="n">200</span></div>
<div class="c r" style="left:441px;top:413px;width:70px;height:24px;line-height:24px;"><span class="n">10</span></div>
<div class="c r" style="left:512px;top:413px;width:70px;height:24px;line-height:24px;"><span class="n">2,000</span></div>
<div class="c l dt" style="left:29px;top:438px;width:95px;height:24px;line-height:24px;"><span class="n">2017/10/14</span></div>
<div class="c l" style="left:125px;top:438px;width:104px;height:24px;line-height:24px;">狸小路商事</div>
<div class="c l" style="left:230px;top:438px;width:139px;height:24px;line-height:24px;">ボールペン赤</div>
<div class="c r" style="left:370px;top:438px;width:70px;height:24px;line-height:24px;"><span class="n">120</span></div>
<div class="c r" style="left:441px;top:438px;width:70px;height:24px;line-height:24px;"><span class="n">20</span></div>
<div class="c r" style="left:512px;top:438px;width:70px;height:24px;line-height:24px;"><span class="n">2,400</span></div>
<div class="c l dt" style="left:29px;top:463px;width:95px;height:24px;line-height:24px;"><span class="n">2017/11/19</span></div>
<div class="c l" style="left:125px;top:463px;width:104px;height:24px;line-height:24px;">宗谷印刷</div>
<div class="c l" style="left:230px;top:463px;width:139px;height:24px;line-height:24px;">コピー用紙<span class="n">A4</span></div>
<div class="c r" style="left:370px;top:463px;width:70px;height:24px;line-height:24px;"><span class="n">500</span></div>
<div class="c r" style="left:441px;top:463px;width:70px;height:24px;line-height:24px;"><span class="n">10</span></div>
<div class="c r" style="left:512px;top:463px;width:70px;height:24px;line-height:24px;"><span class="n">5,000</span></div>
<div class="c l dt" style="left:29px;top:488px;width:95px;height:24px;line-height:24px;"><span class="n">2017/11/25</span></div>
<div class="c l" style="left:125px;top:488px;width:104px;height:24px;line-height:24px;">とかち川産業</div>
<div class="c l" style="left:230px;top:488px;width:139px;height:24px;line-height:24px;">コピー用紙<span class="n">A3</span></div>
<div class="c r" style="left:370px;top:488px;width:70px;height:24px;line-height:24px;"><span class="n">600</span></div>
<div class="c r" style="left:441px;top:488px;width:70px;height:24px;line-height:24px;"><span class="n">20</span></div>
<div class="c r" style="left:512px;top:488px;width:70px;height:24px;line-height:24px;"><span class="n">12,000</span></div>
<div class="c l dt" style="left:29px;top:513px;width:95px;height:24px;line-height:24px;"><span class="n">2017/12/1</span></div>
<div class="c l" style="left:125px;top:513px;width:104px;height:24px;line-height:24px;">とかち川産業</div>
<div class="c l" style="left:230px;top:513px;width:139px;height:24px;line-height:24px;">ボールペン黒</div>
<div class="c r" style="left:370px;top:513px;width:70px;height:24px;line-height:24px;"><span class="n">200</span></div>
<div class="c r" style="left:441px;top:513px;width:70px;height:24px;line-height:24px;"><span class="n">20</span></div>
<div class="c r" style="left:512px;top:513px;width:70px;height:24px;line-height:24px;"><span class="n">4,000</span></div>
<div class="c l dt" style="left:29px;top:538px;width:95px;height:24px;line-height:24px;"><span class="n">2017/12/15</span></div>
<div class="c l" style="left:125px;top:538px;width:104px;height:24px;line-height:24px;">宗谷印刷</div>
<div class="c l" style="left:230px;top:538px;width:139px;height:24px;line-height:24px;">クラフト封筒長４</div>
<div class="c r" style="left:370px;top:538px;width:70px;height:24px;line-height:24px;"><span class="n">200</span></div>
<div class="c r" style="left:441px;top:538px;width:70px;height:24px;line-height:24px;"><span class="n">9</span></div>
<div class="c r" style="left:512px;top:538px;width:70px;height:24px;line-height:24px;"><span class="n">1,800</span></div>
<div class="c l dt" style="left:29px;top:563px;width:95px;height:24px;line-height:24px;"><span class="n">2017/12/23</span></div>
<div class="c l" style="left:125px;top:563px;width:104px;height:24px;line-height:24px;">狸小路商事</div>
<div class="c l" style="left:230px;top:563px;width:139px;height:24px;line-height:24px;">コピー用紙<span class="n">A4</span></div>
<div class="c r" style="left:370px;top:563px;width:70px;height:24px;line-height:24px;"><span class="n">500</span></div>
<div class="c r" style="left:441px;top:563px;width:70px;height:24px;line-height:24px;"><span class="n">20</span></div>
<div class="c r" style="left:512px;top:563px;width:70px;height:24px;line-height:24px;"><span class="n">10,000</span></div>
<div class="c l dt" style="left:29px;top:588px;width:95px;height:24px;line-height:24px;"><span class="n">2017/1/17</span></div>
<div class="c l" style="left:125px;top:588px;width:104px;height:24px;line-height:24px;">宗谷印刷</div>
<div class="c l" style="left:230px;top:588px;width:139px;height:24px;line-height:24px;">コピー用紙<span class="n">B4</span></div>
<div class="c r" style="left:370px;top:588px;width:70px;height:24px;line-height:24px;"><span class="n">550</span></div>
<div class="c r" style="left:441px;top:588px;width:70px;height:24px;line-height:24px;"><span class="n">12</span></div>
<div class="c r" style="left:512px;top:588px;width:70px;height:24px;line-height:24px;"><span class="n">6,600</span></div>
<div class="c l dt" style="left:29px;top:613px;width:95px;height:24px;line-height:24px;"><span class="n">2017/1/25</span></div>
<div class="c l" style="left:125px;top:613px;width:104px;height:24px;line-height:24px;">とかち川産業</div>
<div class="c l" style="left:230px;top:613px;width:139px;height:24px;line-height:24px;">クラフト封筒角２</div>
<div class="c r" style="left:370px;top:613px;width:70px;height:24px;line-height:24px;"><span class="n">200</span></div>
<div class="c r" style="left:441px;top:613px;width:70px;height:24px;line-height:24px;"><span class="n">22</span></div>
<div class="c r" style="left:512px;top:613px;width:70px;height:24px;line-height:24px;"><span class="n">4,400</span></div>
<div class="c l dt" style="left:29px;top:638px;width:95px;height:24px;line-height:24px;"><span class="n">2017/2/21</span></div>
<div class="c l" style="left:125px;top:638px;width:104px;height:24px;line-height:24px;">狸小路商事</div>
<div class="c l" style="left:230px;top:638px;width:139px;height:24px;line-height:24px;">コピー用紙<span class="n">A3</span></div>
<div class="c r" style="left:370px;top:638px;width:70px;height:24px;line-height:24px;"><span class="n">600</span></div>
<div class="c r" style="left:441px;top:638px;width:70px;height:24px;line-height:24px;"><span class="n">10</span></div>
<div class="c r" style="left:512px;top:638px;width:70px;height:24px;line-height:24px;"><span class="n">6,000</span></div>
<div class="c l dt" style="left:29px;top:663px;width:95px;height:24px;line-height:24px;"><span class="n">2017/2/27</span></div>
<div class="c l" style="left:125px;top:663px;width:104px;height:24px;line-height:24px;">宗谷印刷</div>
<div class="c l" style="left:230px;top:663px;width:139px;height:24px;line-height:24px;">ボールペン赤</div>
<div class="c r" style="left:370px;top:663px;width:70px;height:24px;line-height:24px;"><span class="n">120</span></div>
<div class="c r" style="left:441px;top:663px;width:70px;height:24px;line-height:24px;"><span class="n">30</span></div>
<div class="c r" style="left:512px;top:663px;width:70px;height:24px;line-height:24px;"><span class="n">3,600</span></div>
<div style="left:123px;top:285px;width:108px;height:404px;border:2px solid #3366cc"></div>
<div style="left:121px;top:283px;width:7px;height:7px;background:#3366cc;border:1px solid #fff"></div>
<div style="left:226px;top:283px;width:7px;height:7px;background:#3366cc;border:1px solid #fff"></div>
<div style="left:121px;top:684px;width:7px;height:7px;background:#3366cc;border:1px solid #fff"></div>
<div style="left:226px;top:684px;width:7px;height:7px;background:#3366cc;border:1px solid #fff"></div>
</div>
<div style="left:1345px;top:210px;width:21px;height:508px;background:#e6e6e6"></div>
<div style="left:1348px;top:227px;width:15px;height:477px;background:#dadada"></div>
<div class="box" style="left:1348px;top:212px;width:15px;height:15px;border-color:#ababab"></div>
<div class="box" style="left:1348px;top:228px;width:15px;height:451px;border-color:#ababab"></div>
<div class="box" style="left:1348px;top:703px;width:15px;height:15px;border-color:#cdcdcd"></div>
<div style="left:0;top:717px;width:1366px;height:28px;background:#e6e6e6"></div>
<div style="left:0;top:717px;width:1345px;height:1px;background:#9f9f9f"></div>
<div style="left:100px;top:717px;width:89px;height:25px;background:#fff;border-left:1px solid #ababab;border-right:1px solid #ababab;border-bottom:2.500px solid #217346"></div>
<div class="t" id="L64" style="left:111.6px;top:720.8px;font-size:13.3px;line-height:20px;height:20px;color:#217346;transform:scaleX(0.9912);">売上一覧表</div>
<div style="left:851px;top:724px;width:480px;height:15px;background:#dadada"></div>
<div class="box" style="left:836px;top:724px;width:15px;height:15px;border-color:#ababab"></div>
<div class="box" style="left:851px;top:724px;width:447px;height:15px;border-color:#ababab"></div>
<div class="box" style="left:1330px;top:724px;width:15px;height:15px;border-color:#ababab"></div>
<div style="left:0;top:745px;width:1366px;height:21px;background:#f1f1f1;border-top:1px solid #c6c6c6"></div>
<div style="left:0;top:766px;width:1366px;height:2px;background:#1b1b1b"></div>
<div style="left:0;top:766px;width:48px;height:2px;background:#000"></div>
<div class="t" id="L65" style="left:7.9px;top:746.0px;font-size:12px;line-height:20px;height:20px;color:#555;transform:scaleX(0.9744);">入力</div>
<div class="t" id="L66" style="left:1325.3px;top:746.2px;font-size:12px;line-height:20px;height:20px;color:#a6a6a6;transform:scaleX(1.0650);">100%</div>
<svg width="1366" height="58" viewBox="0 710 1366 58" style="left:0;top:710px" fill="none">
<path d="M1351.700 222.500h8l-4-4.500z" fill="#777" transform="translate(0 0)"/>
<path d="M31.400 727v7.400l-4.800-3.700z" fill="#c2c2c2"/><path d="M55.800 727v7.400l4.800-3.700z" fill="#c2c2c2"/>
<circle cx="229.700" cy="730.800" r="7.800" stroke="#777" stroke-width="1.100"/><path d="M225.700 730.800h8M229.700 726.800v8" stroke="#666" stroke-width="1.600"/>
<path d="M819 726.500h2v1.800h-2zM819 729.500h2v1.800h-2zM819 732.500h2v1.800h-2zM819 735.500h2v1.800h-2z" fill="#b5b5b5"/>
<path d="M845.500 728v7l-4.200-3.500z" fill="#666"/><path d="M1336 728v7l4.200-3.500z" fill="#666"/>
<path d="M1351.400 708.700h8.200l-4.100 4.600z" fill="#666"/>
<!-- macro icon -->
<circle cx="54.500" cy="752" r="3.200" fill="#555"/><path d="M53.500 751.500h10.500v10.500h-10.500z" stroke="#555" stroke-width="1"/><path d="M55.500 755.500h7M55.500 757.500h7M55.500 759.500h7" stroke="#555" stroke-width="1" stroke-dasharray="1.500 1"/>
<!-- view icons -->
<g stroke="#777" stroke-width="1.100"><path d="M1080.500 749.500h12v12h-12zM1084.500 749.500v12M1088.500 749.500v12M1080.500 753.500h12M1080.500 757.500h12"/>
<path d="M1118.500 749.500h13v12h-13z"/><path d="M1121.500 752.500h7v6.500h-7zM1123 754.500h4M1123 756.500h4" stroke-width=".9"/>
<path d="M1156.500 749.500h13v12h-13z"/><path d="M1160.500 749.500v6h5v-6M1156.500 755.500h4" /></g>
<path d="M1187 755.500h6.300" stroke="#999" stroke-width="1.600"/><path d="M1197 755.500h100" stroke="#b0b0b0" stroke-width="1"/><path d="M1247.500 753v5.500" stroke="#999" stroke-width="1"/><path d="M1300.800 755.500h8M1304.800 751.500v8" stroke="#999" stroke-width="1.600"/>
</svg>
<svg width="16" height="16" style="left:1348px;top:212px"><path d="M3.500 10h8l-4-4.500z" fill="#777"/></svg>
<div style="left:274px;top:213px;width:210px;height:18px;background:#fff;border:1px solid #c6c6c6;border-radius:2px;box-shadow:0 1px 2px rgba(0,0,0,.10)"></div>
<div class="t" id="L67" style="left:279.8px;top:212.3px;font-size:11.5px;line-height:20px;height:20px;color:#555;transform:scaleX(1.0743);">SUMIF(範囲,</div>
<div class="t" id="L68" style="left:356.3px;top:212.3px;font-size:11.5px;line-height:20px;height:20px;color:#555;transform:scaleX(1.0406);">検索条件,</div>
<div class="t" id="L69" style="left:409.8px;top:212.3px;font-size:11.5px;line-height:20px;height:20px;color:#444;font-weight:500;transform:scaleX(1.1897);">[合計範囲])</div>
<div style="left:438px;top:174px;width:1px;height:20px;background:#d9d9d9"></div>
<div style="left:408px;top:167px;width:42px;height:34px;border:7px solid #fb2a0c;border-radius:5px"></div>
<div style="left:645px;top:280px;width:114px;height:37px;border:7px solid #fb2a0c;border-radius:5px"></div>
<div style="left:455.0px;top:164.1px;width:42px;height:42px;border-radius:50%;background:#fff;box-shadow:0 1px 3px rgba(0,0,0,.35)"></div>
<svg width="40" height="40" style="left:456.0px;top:165.1px"><circle cx="20" cy="20" r="16.600" fill="none" stroke="#fb2a0c" stroke-width="1.600"/></svg>
<div style="left:596.9px;top:277.6px;width:42px;height:42px;border-radius:50%;background:#fff;box-shadow:0 1px 3px rgba(0,0,0,.35)"></div>
<svg width="40" height="40" style="left:597.9px;top:278.6px"><circle cx="20" cy="20" r="16.600" fill="none" stroke="#fb2a0c" stroke-width="1.600"/></svg>
<div class="t" id="L70" style="left:465.2px;top:166.9px;font-size:33px;line-height:36px;height:36px;color:#fb2a0c;font-weight:bold;transform:scaleX(1.1820);">8</div>
<div class="t" id="L71" style="left:607.2px;top:281.2px;font-size:33px;line-height:36px;height:36px;color:#fb2a0c;font-weight:bold;transform:scaleX(1.1438);">7</div>
</body></html>
